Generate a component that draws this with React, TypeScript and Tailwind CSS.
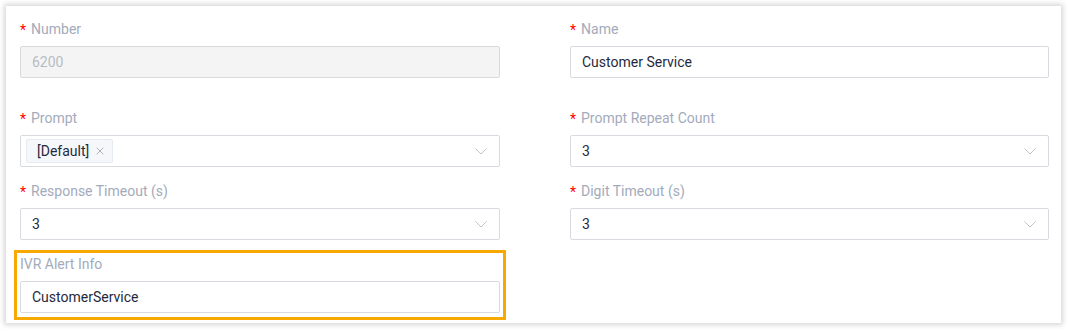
import { X } from 'lucide-react';

function Chevron() {
  return (
    <svg width="12" height="7" viewBox="0 0 12 7" className="shrink-0">
      <path d="M0.5 0.5 L6 6 L11.5 0.5" fill="none" stroke="#c0c4cc" strokeWidth="1" />
    </svg>
  );
}

function Label({ text, required = true }: { text: string; required?: boolean }) {
  return (
    <div className="flex items-center h-5 mb-[7px] text-[14px] text-[#a3abbb]">
      {required && <span className="text-[#ff0000] mr-[5px] text-[14px] leading-none mt-[2px]">*</span>}
      <span>{text}</span>
    </div>
  );
}

function Input({ value, disabled = false }: { value: string; disabled?: boolean }) {
  return (
    <div
      className={
        'h-8 flex items-center px-[11px] border rounded-[2px] text-[14px] ' +
        (disabled
          ? 'bg-[#f4f4f5] border-[#d9d9de] text-[#b8bcc4]'
          : 'bg-white border-[#d9d9e0] text-[#1f2a3d]')
      }
    >
      {value}
    </div>
  );
}

function Select({ value }: { value: string }) {
  return (
    <div className="h-8 flex items-center justify-between pl-[11px] pr-[12px] border border-[#d9d9e0] rounded-[2px] bg-white text-[14px] text-[#1f2a3d]">
      <span>{value}</span>
      <Chevron />
    </div>
  );
}

function TagSelect() {
  return (
    <div className="h-8 flex items-center justify-between pl-[5px] pr-[12px] border border-[#d9d9e0] rounded-[2px] bg-white text-[14px]">
      <span className="flex items-center h-[24px] pl-[10px] pr-[6px] bg-[#f5f7fa] border border-[#e6ebf1] rounded-[2px] text-[#1f2a3d]">
        [Default]
        <X size={12} strokeWidth={1.5} className="ml-[5px] text-[#999]" />
      </span>
      <Chevron />
    </div>
  );
}

export default function App() {
  return (
    <div className="w-[1068px] h-[331px] bg-white p-[6px]" style={{ fontFamily: 'Roboto, "Liberation Sans", sans-serif' }}>
      <div className="w-[1055px] h-[317px] bg-white shadow-[0_0_5px_2px_rgba(0,0,0,0.16)] pt-[13px]">
        <div className="grid grid-cols-[480px_479px] gap-x-[70px] pl-[14px]">
          <div className="mb-[30px]">
            <Label text="Number" />
            <Input value="6200" disabled />
          </div>
          <div className="mb-[30px]">
            <Label text="Name" />
            <Input value="Customer Service" />
          </div>

          <div className="mb-[14px]">
            <Label text="Prompt" />
            <TagSelect />
          </div>
          <div className="mb-[14px]">
            <Label text="Prompt Repeat Count" />
            <Select value="3" />
          </div>

          <div className="mb-[10px]">
            <Label text="Response Timeout (s)" />
            <Select value="3" />
          </div>
          <div className="mb-[10px]">
            <Label text="Digit Timeout (s)" />
            <Select value="3" />
          </div>

          <div className="-ml-[6px] w-[492px] h-[70px] border-[3px] border-[#f7a900] px-[3px] pt-[1px]">
            <Label text="IVR Alert Info" required={false} />
            <Input value="CustomerService" />
          </div>
        </div>
      </div>
    </div>
  );
}
